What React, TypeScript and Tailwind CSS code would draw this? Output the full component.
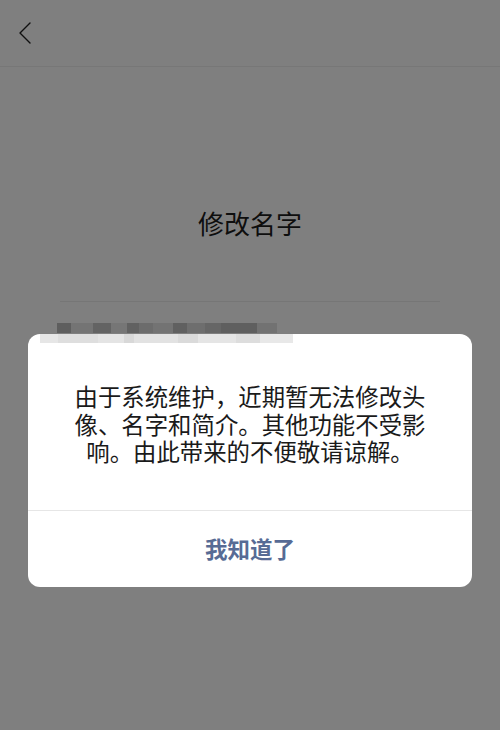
const darkBlocks = [
    { w: 14, c: 'bg-[#5e5e5e]' },
    { w: 22, c: 'bg-[#747474]' },
    { w: 18, c: 'bg-[#636363]' },
    { w: 16, c: 'bg-[#767676]' },
    { w: 12, c: 'bg-[#616161]' },
    { w: 14, c: 'bg-[#6c6c6c]' },
    { w: 20, c: 'bg-[#737373]' },
    { w: 14, c: 'bg-[#606060]' },
    { w: 18, c: 'bg-[#6e6e6e]' },
    { w: 16, c: 'bg-[#666666]' },
    { w: 36, c: 'bg-[#5f5f5f]' },
    { w: 20, c: 'bg-[#727272]' },
];

const lightBlocks = [
    { w: 18, c: 'bg-[#e6e6e6]' },
    { w: 40, c: 'bg-[#dedede]' },
    { w: 26, c: 'bg-[#e4e4e4]' },
    { w: 10, c: 'bg-[#d8d8d8]' },
    { w: 44, c: 'bg-[#e2e2e2]' },
    { w: 20, c: 'bg-[#dadada]' },
    { w: 38, c: 'bg-[#e5e5e5]' },
    { w: 24, c: 'bg-[#dddddd]' },
    { w: 33, c: 'bg-[#e8e8e8]' },
];

export default function App() {
    return (
        <div
            className="relative h-[730px] w-[500px] overflow-hidden bg-[#7f7f7f]"
            style={{ fontFamily: '"Noto Sans CJK SC", "Noto Sans", sans-serif' }}
        >
            {/* Top Bar */}
            <div className="flex h-[67px] items-center border-b border-[#777777] pl-[18px]">
                <svg width="14" height="22" viewBox="0 0 14 22" fill="none">
                    <path d="M12 1 L2 11 L12 21" stroke="#101010" strokeWidth="1.4" strokeLinecap="round" strokeLinejoin="round" />
                </svg>
            </div>

            {/* Page content under the mask */}
            <h1 className="mt-[143px] text-center text-[26px] leading-[26px] font-normal text-[#0e0e0e]">修改名字</h1>
            <div className="mx-[60px] mt-[65px] h-px bg-[#767676]" />
            <div className="mt-[21px] ml-[57px] flex h-[10px] w-[220px]">
                {darkBlocks.map((b, i) => (
                    <div key={i} className={`h-full ${b.c}`} style={{ width: b.w }} />
                ))}
            </div>

            {/* Dialog */}
            <div className="absolute top-[334px] left-[28px] w-[444px] overflow-hidden rounded-[12px] bg-white">
                <div className="absolute top-0 left-[12px] flex h-[9px] w-[253px]">
                    {lightBlocks.map((b, i) => (
                        <div key={i} className={`h-full ${b.c}`} style={{ width: b.w }} />
                    ))}
                </div>
                <p className="px-[42px] pt-[49px] pb-[44px] text-center text-[23.4px] leading-[27.5px] text-[#1a1a1a]">
                    由于系统维护，近期暂无法修改头像、名字和简介。其他功能不受影响。由此带来的不便敬请谅解。
                </p>
                <div className="flex h-[77px] items-center justify-center border-t border-[#e6e6e6]">
                    <span className="text-[22.5px] font-bold text-[#576b95]">我知道了</span>
                </div>
            </div>
        </div>
    );
}
